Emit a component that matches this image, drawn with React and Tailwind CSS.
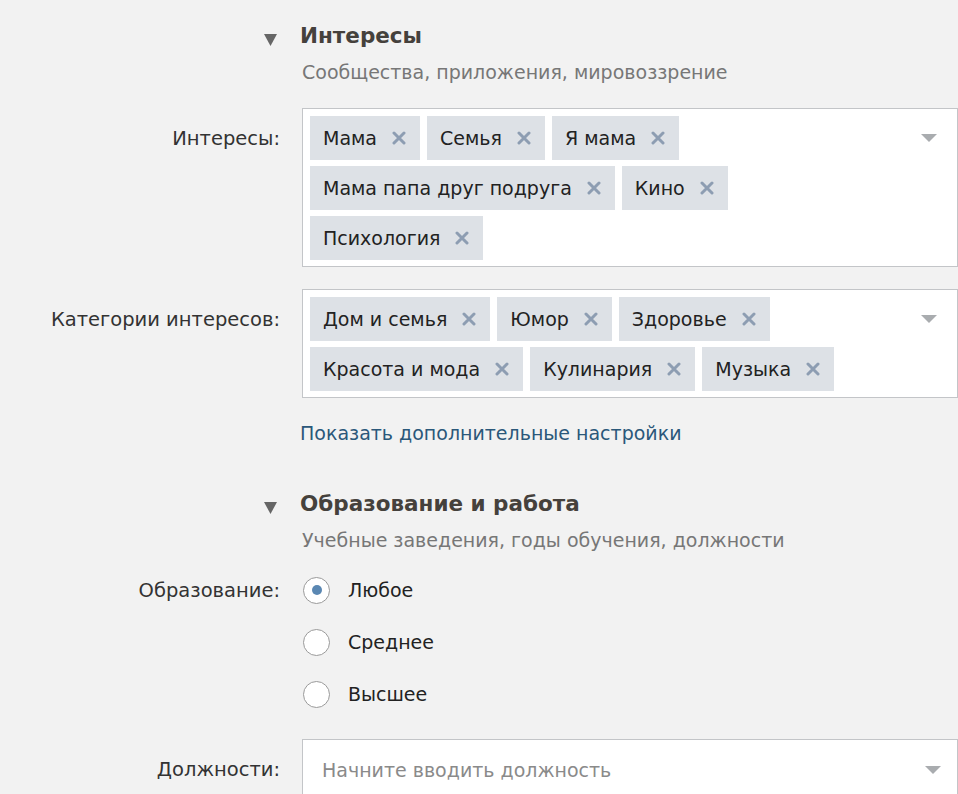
import React from 'react'

const font = { fontFamily: '"DejaVu Sans", sans-serif' }

const Cross = () => (
	<svg width="14" height="14" viewBox="0 0 14 14" className="ml-[15px] shrink-0">
		<path d="M2 2 L12 12 M12 2 L2 12" stroke="#8d9db2" strokeWidth="3" strokeLinecap="round" />
	</svg>
)

const Tag = ({ label }) => (
	<div className="flex items-center h-[44px] pl-[13px] pr-[14px] bg-[#dde1e6] text-[#222] text-[19px]">
		<span>{label}</span>
		<Cross />
	</div>
)

const Arrow = () => (
	<svg width="16" height="9" viewBox="0 0 16 9" className="shrink-0">
		<path d="M0 0 L16 0 L8 8 Z" fill="#a9acaf" />
	</svg>
)

const Heading = ({ title, sub }) => (
	<div className="flex">
		<div className="w-[300px] flex justify-end pr-[23px] pt-[14px]">
			<svg width="13" height="12" viewBox="0 0 13 12">
				<path d="M0 0 L13 0 L6.5 12 Z" fill="#666" />
			</svg>
		</div>
		<div>
			<div className="text-[21.5px] font-bold text-[#45413c] leading-[30px] pt-[1px]">{title}</div>
			<div className="text-[19px] text-[#777] mt-[9px] ml-[2px] leading-[24px]">{sub}</div>
		</div>
	</div>
)

const TagBox = ({ label, rows, className }) => (
	<div className={`flex ${className}`}>
		<div className="w-[280px] text-right text-[19.5px] text-[#333] pt-[16px]">{label}</div>
		<div className="ml-[22px] flex-1 bg-white border border-[#c3c5c8] flex pl-[7px] pt-[7px] pb-[6px] pr-[20px]">
			<div className="flex-1 flex flex-col gap-[6px]">
				{rows.map((row, i) => (
					<div key={i} className="flex gap-[7px]">
						{row.map((t) => <Tag key={t} label={t} />)}
					</div>
				))}
			</div>
			<div className="pt-[18px]"><Arrow /></div>
		</div>
	</div>
)

const Radio = ({ label, checked }) => (
	<div className="flex items-center h-[52px]">
		<div className="w-[27px] h-[27px] rounded-full border border-[#9a9a9a] bg-white flex items-center justify-center ml-[1px]">
			{checked && <div className="w-[10px] h-[10px] rounded-full bg-[#5a87b2]" />}
		</div>
		<span className="ml-[18px] text-[19px] text-[#222]">{label}</span>
	</div>
)

export default function App() {
	return (
		<div style={font} className="w-[958px] h-[794px] overflow-hidden bg-[#f2f2f2] pt-[20px]">
			<Heading title="Интересы" sub="Сообщества, приложения, мировоззрение" />

			<TagBox
				className="mt-[24px]"
				label="Интересы:"
				rows={[
					['Мама', 'Семья', 'Я мама'],
					['Мама папа друг подруга', 'Кино'],
					['Психология'],
				]}
			/>

			<TagBox
				className="mt-[22px]"
				label="Категории интересов:"
				rows={[
					['Дом и семья', 'Юмор', 'Здоровье'],
					['Красота и мода', 'Кулинария', 'Музыка'],
				]}
			/>

			<div className="ml-[300px] mt-[22px] text-[19px] text-[#2b587a] leading-[26px]">
				Показать дополнительные настройки
			</div>

			<div className="mt-[42px]">
				<Heading title="Образование и работа" sub="Учебные заведения, годы обучения, должности" />
			</div>

			<div className="flex mt-[12px]">
				<div className="w-[280px] text-right text-[19.5px] text-[#333] pt-[12px]">Образование:</div>
				<div className="ml-[22px] flex flex-col">
					<Radio label="Любое" checked />
					<Radio label="Среднее" />
					<Radio label="Высшее" />
				</div>
			</div>

			<div className="flex mt-[19px]">
				<div className="w-[280px] text-right text-[19.5px] text-[#333] pt-[16px]">Должности:</div>
				<div className="ml-[22px] flex-1 h-[70px] bg-white border border-[#c3c5c8] flex items-start pl-[19px] pr-[16px] pt-[16px]">
					<span className="flex-1 text-[19px] text-[#8a8a8a]">Начните вводить должность</span>
					<div className="pt-[10px]"><Arrow /></div>
				</div>
			</div>
		</div>
	)
}
